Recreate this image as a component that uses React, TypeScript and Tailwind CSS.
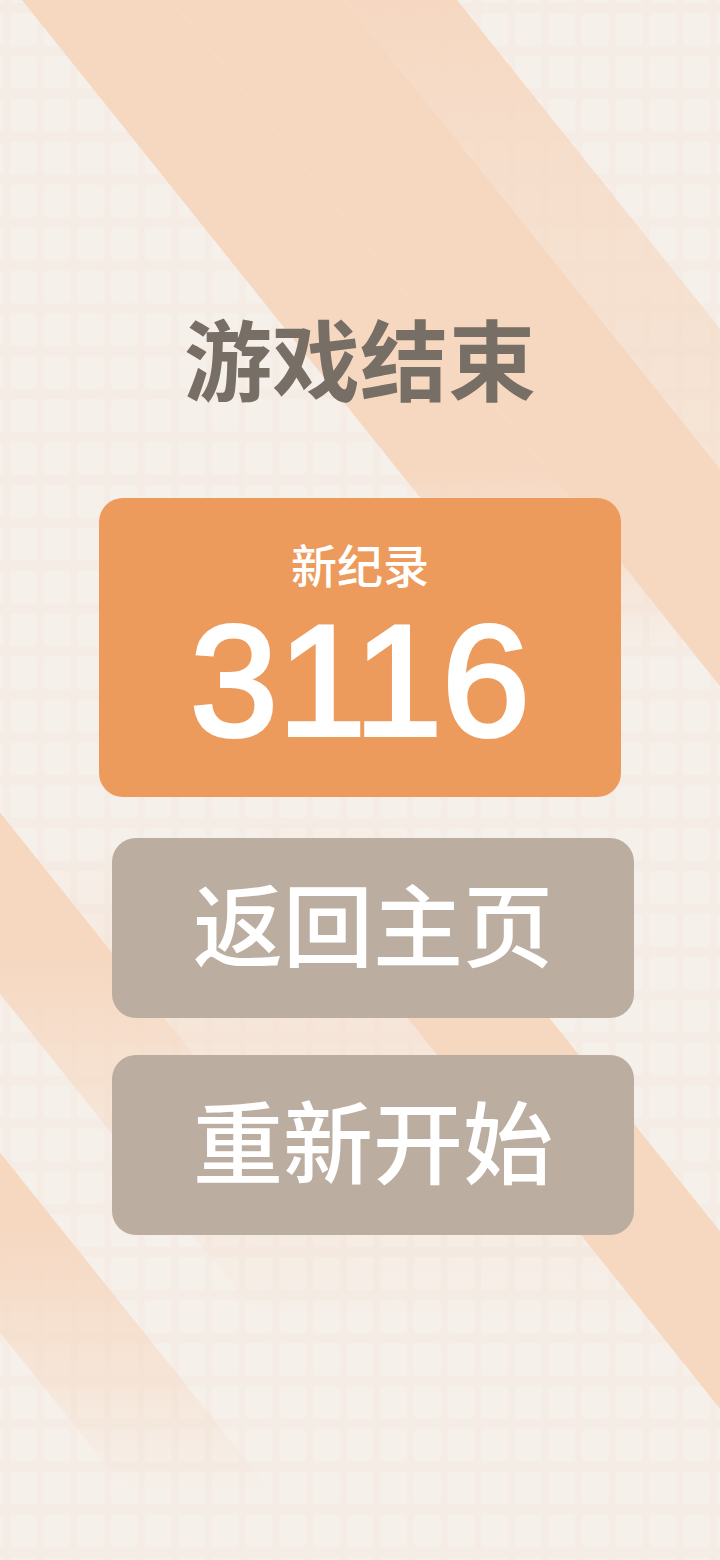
import type { ReactNode } from "react";

const K = 0.8; // horizontal shift per px of height for the diagonal bands

function band(c1: number, c2: number, y1: number, y2: number) {
  return `${c1 + K * y1},${y1} ${c2 + K * y1},${y1} ${c2 + K * y2},${y2} ${c1 + K * y2},${y2}`;
}

const PEACH = "#f6d8c1";

type Band = {
  id: string;
  c: [number, number];
  y: [number, number];
  stops: [number, number][]; // [y, opacity]
};

const bands: Band[] = [
  { id: "a-left", c: [22, 171], y: [-20, 720], stops: [[0, 1], [470, 1], [660, 0]] },
  { id: "b", c: [171, 345], y: [-20, 900], stops: [[0, 1], [900, 1]] },
  { id: "a-right", c: [345, 457], y: [-20, 500], stops: [[0, 1], [150, 0.75], [480, 0.45]] },
  { id: "e", c: [-407, -265], y: [700, 1600], stops: [[820, 0], [1000, 1], [1600, 1]] },
  { id: "f", c: [-650, -407], y: [850, 1400], stops: [[850, 0], [1000, 0.4], [1110, 0.4], [1320, 0]] },
  { id: "c", c: [-795, -650], y: [760, 1400], stops: [[780, 1], [960, 1], [1070, 0.6], [1320, 0]] },
  { id: "d", c: [-1066, -922], y: [1100, 1600], stops: [[1100, 1], [1230, 1], [1490, 0]] },
];

function Backdrop() {
  return (
    <svg
      className="absolute inset-0 h-full w-full"
      viewBox="0 0 720 1560"
      preserveAspectRatio="none"
      aria-hidden
    >
      <defs>
        <pattern
          id="tiles"
          width="33.65"
          height="42.9"
          patternUnits="userSpaceOnUse"
          patternTransform="translate(10 13)"
        >
          <rect x="0" y="0" width="27" height="33" rx="3" fill="#f6f0ea" />
        </pattern>
        {bands.map((b) => {
          const y0 = b.stops[0][0];
          const y1 = b.stops[b.stops.length - 1][0];
          return (
            <linearGradient
              key={b.id}
              id={`fade-${b.id}`}
              gradientUnits="userSpaceOnUse"
              x1="0"
              y1={y0}
              x2="0"
              y2={y1}
            >
              {b.stops.map(([y, o], i) => (
                <stop key={i} offset={(y - y0) / (y1 - y0)} stopColor={PEACH} stopOpacity={o} />
              ))}
            </linearGradient>
          );
        })}
      </defs>
      <rect width="720" height="1560" fill="#f4ece5" />
      <rect width="720" height="1560" fill="url(#tiles)" />
      {bands.map((b) => (
        <polygon key={b.id} points={band(b.c[0], b.c[1], b.y[0], b.y[1])} fill={`url(#fade-${b.id})`} />
      ))}
    </svg>
  );
}

function MenuButton({ children }: { children: ReactNode }) {
  return (
    <button
      type="button"
      className="ml-[112px] flex h-[180px] w-[522px] items-center justify-center rounded-[24px] bg-[#bbada0] pb-[14px] text-[90px] font-medium leading-none text-white"
    >
      {children}
    </button>
  );
}

export default function App() {
  return (
    <div className="relative h-[1560px] w-[720px] overflow-hidden bg-[#f4ece5] font-['Noto_Sans_CJK_SC',sans-serif]">
      <Backdrop />

      <main className="relative flex flex-col pt-[312px]">
        <h1 className="text-center text-[88px] font-bold leading-none text-[#776e65]">
          游戏结束
        </h1>

        <section className="mx-auto mt-[98px] flex h-[299px] w-[522px] flex-col items-center rounded-[24px] bg-[#ec9b5d] pt-[42px] text-white">
          <p className="text-[46px] font-medium leading-none">新纪录</p>
          <p className="mt-[15px] font-['Liberation_Sans',Arial,sans-serif] text-[158px] font-normal leading-none [-webkit-text-stroke:4px_white]">
            3116
          </p>
        </section>

        <div className="mt-[41px] flex flex-col gap-[37px]">
          <MenuButton>返回主页</MenuButton>
          <MenuButton>重新开始</MenuButton>
        </div>
      </main>
    </div>
  );
}
